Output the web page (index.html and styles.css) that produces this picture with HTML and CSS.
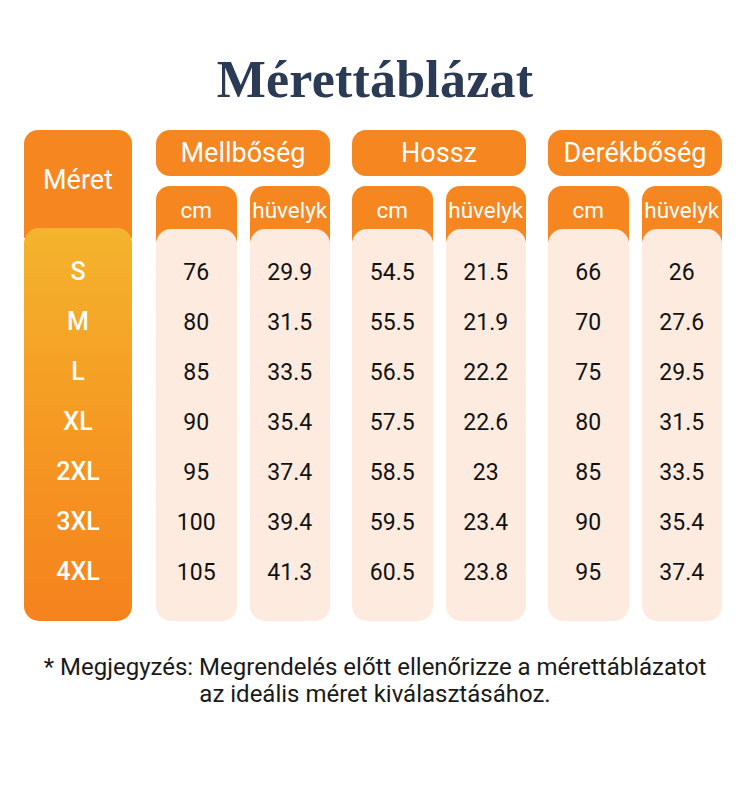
FILE: index.html
```html
<!DOCTYPE html>
<html lang="hu">
<head>
<meta charset="utf-8">
<title>Mérettáblázat</title>
<link rel="stylesheet" href="styles.css">
</head>
<body>
<main class="page">
  <h1 class="title">Mérettáblázat</h1>
  <div class="chart">
    <div class="size-col">
      <div class="size-head">Méret</div>
      <div class="size-body">
        <div class="cell">S</div>
        <div class="cell">M</div>
        <div class="cell">L</div>
        <div class="cell">XL</div>
        <div class="cell">2XL</div>
        <div class="cell">3XL</div>
        <div class="cell">4XL</div>
      </div>
    </div>
    <div class="groups">
      <div class="group">
        <div class="group-head">Mellbőség</div>
        <div class="cols">
          <div class="col">
            <div class="sub-head">cm</div>
            <div class="col-body">
              <div class="cell">76</div><div class="cell">80</div><div class="cell">85</div><div class="cell">90</div><div class="cell">95</div><div class="cell">100</div><div class="cell">105</div>
            </div>
          </div>
          <div class="col">
            <div class="sub-head">hüvelyk</div>
            <div class="col-body">
              <div class="cell">29.9</div><div class="cell">31.5</div><div class="cell">33.5</div><div class="cell">35.4</div><div class="cell">37.4</div><div class="cell">39.4</div><div class="cell">41.3</div>
            </div>
          </div>
        </div>
      </div>
      <div class="group">
        <div class="group-head">Hossz</div>
        <div class="cols">
          <div class="col">
            <div class="sub-head">cm</div>
            <div class="col-body">
              <div class="cell">54.5</div><div class="cell">55.5</div><div class="cell">56.5</div><div class="cell">57.5</div><div class="cell">58.5</div><div class="cell">59.5</div><div class="cell">60.5</div>
            </div>
          </div>
          <div class="col">
            <div class="sub-head">hüvelyk</div>
            <div class="col-body">
              <div class="cell">21.5</div><div class="cell">21.9</div><div class="cell">22.2</div><div class="cell">22.6</div><div class="cell">23</div><div class="cell">23.4</div><div class="cell">23.8</div>
            </div>
          </div>
        </div>
      </div>
      <div class="group">
        <div class="group-head">Derékbőség</div>
        <div class="cols">
          <div class="col">
            <div class="sub-head">cm</div>
            <div class="col-body">
              <div class="cell">66</div><div class="cell">70</div><div class="cell">75</div><div class="cell">80</div><div class="cell">85</div><div class="cell">90</div><div class="cell">95</div>
            </div>
          </div>
          <div class="col">
            <div class="sub-head">hüvelyk</div>
            <div class="col-body">
              <div class="cell">26</div><div class="cell">27.6</div><div class="cell">29.5</div><div class="cell">31.5</div><div class="cell">33.5</div><div class="cell">35.4</div><div class="cell">37.4</div>
            </div>
          </div>
        </div>
      </div>
    </div>
  </div>
  <p class="note">* Megjegyzés: Megrendelés előtt ellenőrizze a mérettáblázatot<br>az ideális méret kiválasztásához.</p>
</main>
</body>
</html>
```
FILE: styles.css
```css
* { box-sizing: border-box; }
html, body { margin: 0; padding: 0; background: #ffffff; }
body { font-family: Roboto, "Liberation Sans", sans-serif; }
.page { width: 750px; height: 800px; padding-top: 50px; }
.title {
  margin: 0 0 20px;
  font-family: "Liberation Serif", serif;
  font-weight: 700;
  font-size: 52px;
  line-height: 60px;
  color: #2b3a55;
  text-align: center;
  letter-spacing: 0.2px;
}
.chart { display: flex; gap: 24px; padding-left: 24px; }
.size-col { width: 108px; display: flex; flex-direction: column; }
.size-head {
  height: 108px;
  background: #f6861f;
  border-radius: 14px 14px 0 0;
  color: #fff;
  font-size: 27px;
  line-height: 100px;
  text-align: center;
}
.size-body {
  position: relative;
  margin-top: -10px;
  height: 393px;
  border-radius: 15px;
  background: linear-gradient(180deg, #f4b42d 0%, #f59a23 50%, #f5821e 100%);
  padding-top: 19px;
  color: #fff;
  font-weight: 500;
}
.size-body .cell { font-size: 25px; }
.cell { height: 50px; line-height: 50px; text-align: center; font-size: 23px; }
.groups { display: flex; gap: 22px; }
.group { width: 174px; display: flex; flex-direction: column; }
.group-head {
  height: 46px;
  background: #f6861f;
  border-radius: 14px;
  color: #fff;
  font-size: 27px;
  line-height: 46px;
  text-align: center;
  margin-bottom: 10px;
}
.cols { display: flex; gap: 13px; }
.col { flex: 1; display: flex; flex-direction: column; }
.sub-head {
  height: 56px;
  background: #f6861f;
  border-radius: 14px 14px 0 0;
  color: #fff;
  font-size: 22.5px;
  line-height: 48px;
  text-align: center;
  white-space: nowrap;
}
.col-body {
  position: relative;
  margin-top: -13px;
  height: 392px;
  border-radius: 15px;
  background: #fdebdf;
  padding-top: 19px;
  color: #111;
}
.note {
  margin: 33px 0 0;
  text-align: center;
  font-size: 24px;
  line-height: 27px;
  color: #1a1a1a;
}
```
